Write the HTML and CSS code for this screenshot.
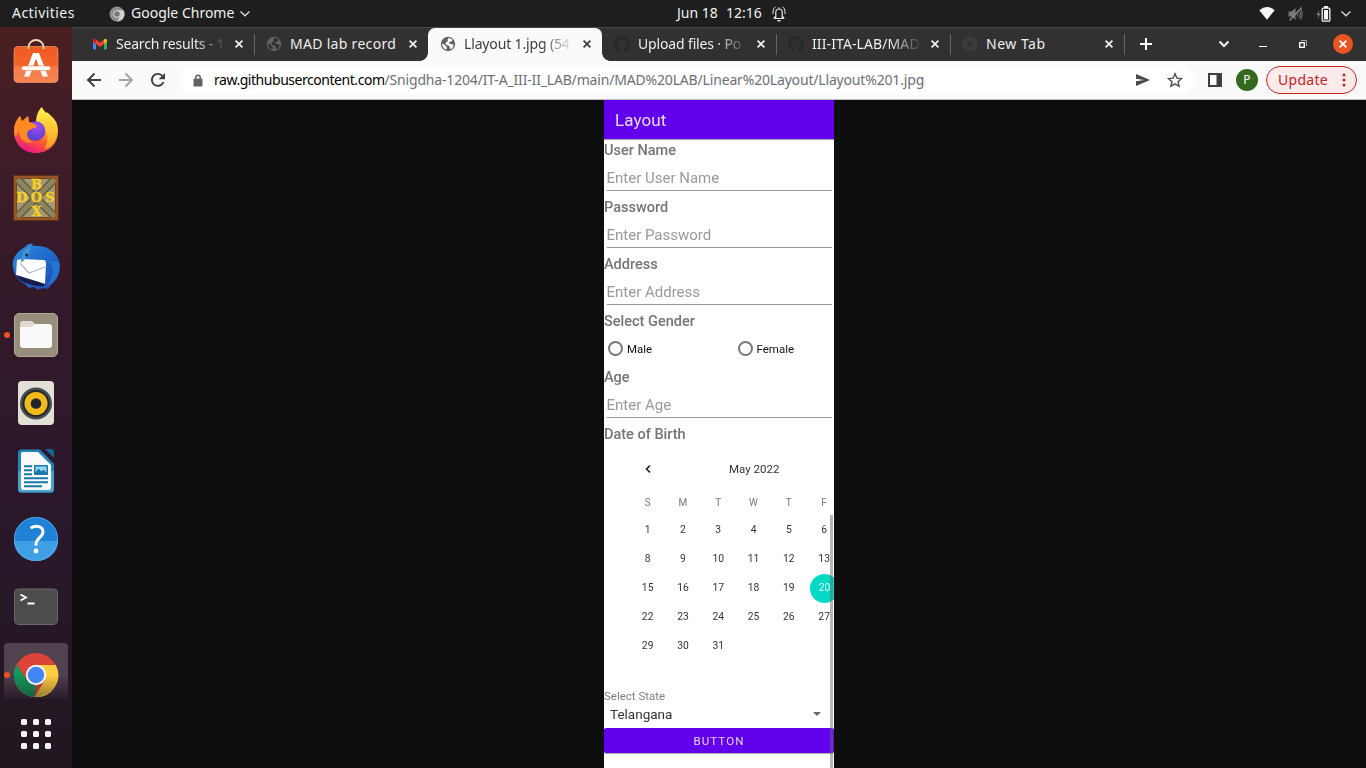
FILE: index.html
```html
<!DOCTYPE html>
<html lang="en">
<head>
<meta charset="utf-8">
<title>Llayout 1.jpg</title>
<link rel="stylesheet" href="styles.css">
</head>
<body>
<svg width="0" height="0" class="defs">
  <defs>
    <linearGradient id="orange" x1="0" y1="0" x2="0" y2="1"><stop offset="0" stop-color="#f15a22"/><stop offset=".55" stop-color="#f4642c"/><stop offset=".56" stop-color="#f67a47"/><stop offset="1" stop-color="#f68752"/></linearGradient>
    <linearGradient id="fox" x1=".8" y1="0" x2=".3" y2="1"><stop offset="0" stop-color="#fff44f"/><stop offset=".35" stop-color="#ffb01f"/><stop offset=".65" stop-color="#ff5a30"/><stop offset="1" stop-color="#e8128f"/></linearGradient>
    <linearGradient id="flame" x1=".5" y1="0" x2=".5" y2="1"><stop offset="0" stop-color="#fff24c"/><stop offset="1" stop-color="#ff9e22"/></linearGradient>
    <radialGradient id="globe" cx=".6" cy=".3" r=".8"><stop offset="0" stop-color="#a34cf0"/><stop offset="1" stop-color="#4a3ec8"/></radialGradient>
    <linearGradient id="bird" x1="0" y1="0" x2="1" y2="1"><stop offset="0" stop-color="#2b8fe6"/><stop offset=".6" stop-color="#1e62c4"/><stop offset="1" stop-color="#253fa8"/></linearGradient>
    <linearGradient id="shade" x1="0" y1="0" x2="0" y2="1"><stop offset=".5" stop-color="#211720" stop-opacity="0"/><stop offset="1" stop-color="#211720" stop-opacity=".45"/></linearGradient>
    <symbol id="x" viewBox="0 0 10 10"><path d="M1.600 1.600l6.800 6.800M8.400 1.600L1.600 8.400" fill="none" stroke="currentColor" stroke-width="1.800"/></symbol>
    <symbol id="world" viewBox="0 0 16 16"><circle cx="8" cy="8" r="7.200" fill="currentColor"/><path d="M8.400 2.100c1.600 0 3 .7 4 1.800l-.9 1.600-2.200.4-.4 1.300 1.800.7 2.900.5c0 1.800-1 3.900-2.700 4.700-.9-.1-1.300-.9-1-1.800L8.600 9.500 6.600 8.900 5.400 7.500l1.100-1.600 1.500-.7-.5-1.300zM2 7.400l2.300 1.200 2 1.700.5 1.500-.3 1.800C3.900 12.900 1.900 10.600 2 7.400z" fill="var(--cut)"/></symbol>
    <symbol id="octocat" viewBox="0 0 16 16"><path fill="currentColor" d="M8 0C3.580 0 0 3.580 0 8c0 3.540 2.290 6.530 5.470 7.590.4.070.55-.17.55-.38 0-.19-.01-.82-.01-1.490-2.010.37-2.530-.49-2.690-.94-.09-.23-.48-.94-.82-1.130-.28-.15-.68-.52-.01-.53.63-.01 1.080.58 1.230.82.72 1.210 1.870.87 2.330.66.070-.52.28-.87.51-1.070-1.780-.2-3.640-.89-3.640-3.950 0-.87.31-1.590.82-2.150-.08-.2-.36-1.020.08-2.120 0 0 .67-.21 2.200.82.640-.18 1.320-.27 2-.27s1.360.09 2 .27c1.530-1.040 2.200-.82 2.200-.82.440 1.100.160 1.920.080 2.120.510.560.820 1.270.820 2.150 0 3.070-1.870 3.750-3.650 3.950.290.250.540.730.540 1.480 0 1.070-.010 1.930-.010 2.200 0 .210.150.460.550.380A8.010 8.010 0 0 0 16 8c0-4.420-3.580-8-8-8z"/></symbol>
    <symbol id="mono-chrome" viewBox="0 0 16 16"><circle cx="8" cy="8" r="7.500" fill="var(--a)"/><path d="M8 4.200h6.500A7.500 7.500 0 0 1 8 15.500L11.300 10z" fill="var(--b)"/><circle cx="8" cy="8" r="3.700" fill="var(--b)"/><circle cx="8" cy="8" r="2.700" fill="var(--c)"/></symbol>
  </defs>
</svg>

<header class="topbar">
  <span class="activities">Activities</span>
  <div class="app-menu">
    <svg class="mono" width="16" height="16"><use href="#mono-chrome"/></svg>
    <span class="app-name">Google Chrome</span>
    <svg width="12" height="8" viewBox="0 0 12 8"><path d="M1.500 1.500L6 5.800l4.500-4.300" fill="none" stroke="#ddd" stroke-width="1.300"/></svg>
  </div>
  <div class="clock"><span class="date">Jun 18</span><span class="time">12:16</span>
    <svg width="14" height="17" viewBox="0 0 14 17" fill="none" stroke="#e4e4e4"><path d="M2.500 13.500h9M3.800 13V7.200a3.200 3.200 0 0 1 6.400 0V13M1.800 13.500l1.700-2M12.200 13.500l-1.700-2M7 4V2.500" stroke-width="1.200"/><path d="M3.600 1.700A6 6 0 0 0 1 6.500V9M10.400 1.700A6 6 0 0 1 13 6.500V9" stroke-width="1"/><path d="M5.500 15.700h3" stroke-width="1.500"/></svg>
  </div>
  <div class="status">
    <svg width="16" height="13" viewBox="0 0 16 13"><path d="M.3 3.200Q8-3 15.700 3.200L8 12.700z" fill="#f5f5f5"/></svg>
    <svg width="15" height="14" viewBox="0 0 15 14"><path d="M.5 4.500h3L7.500 1v12L3.500 9.500h-3z" fill="#777"/><path d="M9 4.500q1.800 2.500 0 5M11 3q3 4 0 8M12.800 1.500q3 5.500-.5 11" fill="none" stroke="#6a6a6a" stroke-width="1.200"/><path d="M13.500.5l-12 13" stroke="#888" stroke-width="1.200"/></svg>
    <svg width="15" height="16" viewBox="0 0 15 16"><path d="M3.500 4L.5 9h2L1.500 13l3-5.300h-2z" fill="#888"/><path d="M8 0h4v2H8z" fill="#f5f5f5"/><rect x="6.200" y="2.200" width="7.600" height="13" rx="1" fill="none" stroke="#f5f5f5" stroke-width="1.300"/><rect x="8" y="4" width="4" height="9.500" fill="#f5f5f5"/></svg>
    <svg width="12" height="8" viewBox="0 0 12 8"><path d="M1.500 1.500L6 5.800l4.500-4.300" fill="none" stroke="#ddd" stroke-width="1.300"/></svg>
  </div>
</header>

<div class="desktop">
  <nav class="dock">
    <div class="dock-item"><svg width="48" height="48" viewBox="0 0 48 48"><rect x="2" y="8.500" width="44" height="36" rx="4" fill="url(#orange)" stroke="#f79a70" stroke-width=".7"/><path d="M16.500 11V9a7.500 7 0 0 1 15 0v2" fill="none" stroke="#f5dcae" stroke-width="1.800"/><path d="M21 15h6l9 23.500h-5.500L24 20.500 17.500 38.500H12z" fill="#fff"/><rect x="9.500" y="28" width="29" height="4.500" rx="2.200" fill="#fff" stroke="#f4703b" stroke-width=".6"/></svg></div>
    <div class="dock-item"><svg width="48" height="48" viewBox="0 0 48 48"><path d="M2 25c0-6 2-10 6-15l2 6 6-6 1 7c5-1 8-1 11 0 2-7 4-12 8-10 7 6 10 10 10 18 0 13-9 22-22 22S2 38 2 25z" fill="url(#fox)"/><path d="M30 1c1 4 7 8 11 14 5 8 5 15 1 21-2 4-5 6-10 7 6-8 5-21-8-27 0-5 2-12 6-15z" fill="url(#flame)"/><circle cx="23.500" cy="25" r="9.800" fill="url(#globe)"/><path d="M8 10l2 5 6-5 1 6c3 1 5 1 8 4-2 3-6 2-9 5-2 5 0 9 5 12-9 1-14-5-14-12-2 2-3 4-3 7-4-8-1-17 4-22z" fill="#ff8a22"/></svg></div>
    <div class="dock-item"><svg width="46" height="46" viewBox="0 0 46 46"><rect width="46" height="46" fill="#9b5424"/><rect x="3.500" y="3.500" width="39" height="39" fill="#a39874" stroke="#53331a"/><path d="M4 4l38 38M42 4L4 42" stroke="#625b40" stroke-width="8"/><path d="M4 4l38 38M42 4L4 42" stroke="#8d8460" stroke-width="5"/><path d="M2 2h42v42H2z" fill="none" stroke="#9b5424" stroke-width="3"/><path d="M.5.5h45v45H.5z" fill="none" stroke="#5c2f12" stroke-width="1"/><g class="dos-text"><text x="23.500" y="13.500">B</text><text x="9" y="27">D</text><text x="23.500" y="27">O</text><text x="37" y="27">S</text><text x="23.500" y="41">X</text></g></svg></div>
    <div class="dock-item bird"><svg width="48" height="48" viewBox="0 0 48 48"><path d="M1 18C3 11 8 7 13 4c2-3 5-4 8-3l-1 2C35 1 47 10 48 23c0 9-4 15-9 19l-3 4-6-1-4 2-4-3-5 1-4-4C7 39-1 29 1 18z" fill="url(#bird)"/><path d="M5 17l5-1L31 17q3 0 3 3l-1 21L4 32z" fill="#fff"/><path d="M8 20l9 10 16-6" fill="none" stroke="#b5b5c0" stroke-width="1.200"/><path d="M9 19c0-8 4-14 10-16-2 3 0 5-3 8-2 4-3 6-6 8z" fill="#4793ce"/><circle cx="14.500" cy="12" r="1.500" fill="#15254f"/><path d="M4 32l29 9-1 2c-6 1-11-1-15-2l-4-1C9 38 6 36 4 32z" fill="#1a1b48"/><path d="M33 17c7 3 9 8 7 16l-5 10c10-5 14-14 12-24z" fill="#2375d1"/></svg></div>
    <div class="dock-item running files"><svg width="48" height="48" viewBox="0 0 48 48"><rect x="2.500" y="2.500" width="43" height="43" rx="4.500" fill="#968e7b" stroke="#b1aa99"/><path d="M8 13q0-3 3-3h9l3 3v6H8z" fill="#dfdbd0"/><path d="M8 18q0-2 2-2h10l3-3h14q3 0 3 3v18q0 3-3 3H11q-3 0-3-3z" fill="#fafafa"/></svg></div>
    <div class="dock-item"><svg width="48" height="48" viewBox="0 0 48 48"><rect x="6" y="2" width="36" height="44" rx="4" fill="#e3e0d5"/><circle cx="24" cy="24.500" r="16" fill="#484d52"/><circle cx="24" cy="24.500" r="13.500" fill="#24282d"/><circle cx="24" cy="24.500" r="11.500" fill="#f2b91d"/><circle cx="24" cy="24.500" r="5.300" fill="#222629"/></svg></div>
    <div class="dock-item"><svg width="48" height="48" viewBox="0 0 48 48"><path d="M9.500 2.500H28L42 17v25q0 3.500-3.500 3.500h-29Q6 45.500 6 42V6q0-3.500 3.500-3.500z" fill="#2382b8"/><path d="M6 24h36v18q0 3.500-3.500 3.500h-29Q6 45.500 6 42z" fill="#49a0cd"/><path d="M10.500 5H26l13 13v23q0 2-2 2H11q-2 0-2-2V7q0-2 1.500-2z" fill="#fafafa"/><path d="M33 2h6q3 0 3 3v6z" fill="#176391"/><path d="M12 19.200h8M12 23.200h8M12 27.200h8M12 31.300h24M12 35.300h24M12 39.300h18" stroke="#1678ad" stroke-width="2"/><rect x="22" y="18" width="14" height="10" rx="1" fill="#1678ad"/><path d="M23.500 19.500h11v6l-3-3-2 2-3-3-3 4z" fill="#98d7f4"/></svg></div>
    <div class="dock-item"><svg width="48" height="48" viewBox="0 0 48 48"><circle cx="24" cy="24" r="22" fill="#1f82d6"/><path d="M2 26a22 20 0 0 0 44 0z" fill="#3f9fe5"/><circle cx="24" cy="24" r="21.600" fill="none" stroke="#5ab0eb" stroke-width=".8"/><path d="M18.500 13c6-3.500 12.500-1.500 12.500 4 0 5-7 6.500-7 12v1.500" fill="none" stroke="#fff" stroke-width="3"/><circle cx="24" cy="36" r="2.400" fill="#fff"/></svg></div>
    <div class="dock-item"><svg width="48" height="48" viewBox="0 0 48 48"><rect x="2.500" y="6" width="43" height="35.500" rx="4" fill="#4c4c4c" stroke="#686868"/><path d="M8.500 11.500l5.500 3-5.500 3M15.500 20.500h7" fill="none" stroke="#fff" stroke-width="1.800"/></svg></div>
    <div class="dock-item running current"><svg width="48" height="48" viewBox="0 0 48 48"><circle cx="24" cy="24" r="22" fill="#db4437"/><path d="M4.500 13.500L15 29l9 6-1.500 11A22 22 0 0 1 4.500 13.500z" fill="#11985a"/><path d="M24 14h19.800A22 22 0 0 1 22.600 46L33 29z" fill="#ffcd40"/><circle cx="24" cy="24" r="22" fill="url(#shade)"/><circle cx="24" cy="24" r="10.200" fill="#f1f1f1"/><circle cx="24" cy="24" r="8.200" fill="#4285f4"/></svg></div>
    <div class="apps"><i></i><i></i><i></i><i></i><i></i><i></i><i></i><i></i><i></i></div>
  </nav>

  <main class="browser">
    <div class="tabs">
      <div class="tab line"><svg width="16" height="16" viewBox="0 0 16 16"><path d="M1 3v10.500h3V6z" fill="#4285f4"/><path d="M12 6v7.500h3V3z" fill="#34a853"/><path d="M4 3.500l4 3 4-3V8l-4 3-4-3z" fill="#ea4335"/><path d="M1 4.500Q1.500 1.800 4 3.500V8L1 5.800z" fill="#c5221f"/><path d="M15 4.500Q14.500 1.800 12 3.500V8l3-2.200z" fill="#fbbc04"/></svg><span class="title fade t-search">Search results - 1</span><svg class="close"><use href="#x"/></svg></div>
      <div class="tab"><svg class="world dark" width="16" height="16"><use href="#world"/></svg><span class="title t-mad">MAD lab record</span><svg class="close"><use href="#x"/></svg></div>
      <div class="tab active"><svg class="world" width="16" height="16"><use href="#world"/></svg><span class="title fade t-lay">Llayout 1.jpg (54</span><svg class="close"><use href="#x"/></svg></div>
      <div class="tab line"><svg class="cat" width="16" height="16"><use href="#octocat"/></svg><span class="title fade t-up">Upload files · Po</span><svg class="close"><use href="#x"/></svg></div>
      <div class="tab line"><svg class="cat" width="16" height="16"><use href="#octocat"/></svg><span class="title fade t-iii">III-ITA-LAB/MAD</span><svg class="close"><use href="#x"/></svg></div>
      <div class="tab line"><svg class="mono dim" width="16" height="16"><use href="#mono-chrome"/></svg><span class="title t-new">New Tab</span><svg class="close"><use href="#x"/></svg></div>
      <svg class="plus" width="14" height="14" viewBox="0 0 14 14"><path d="M7 1v12M1 7h12" stroke="#fff" stroke-width="2"/></svg>
      <div class="window-buttons">
        <svg width="12" height="10" viewBox="0 0 12 10"><path d="M1.500 2.500L6 7l4.500-4.500" fill="none" stroke="#f4f4f4" stroke-width="2"/></svg>
        <svg width="8" height="8" viewBox="0 0 8 8"><path d="M0 6.500h8" stroke="#fff"/></svg>
        <svg width="8" height="8" viewBox="0 0 8 8"><path d="M2 .5h5.500V6" fill="none" stroke="#aaa"/><rect x=".7" y="2.700" width="4.600" height="4.600" fill="none" stroke="#fff" stroke-width="1.400"/></svg>
        <span class="quit"><svg width="10" height="10"><use href="#x"/></svg></span>
      </div>
    </div>

    <div class="toolbar">
      <svg class="back" width="16" height="16" viewBox="0 0 16 16"><path d="M15 8H2M8.500 1.500L2 8l6.500 6.500" fill="none" stroke="#3c4043" stroke-width="1.900"/></svg>
      <svg class="fwd" width="16" height="16" viewBox="0 0 16 16"><path d="M1 8h13M7.500 1.500L14 8l-6.500 6.500" fill="none" stroke="#a3a3a5" stroke-width="1.900"/></svg>
      <svg class="reload" width="16" height="16" viewBox="0 0 16 16"><path d="M13.500 10A6 6 0 1 1 12.500 4L14 5.500" fill="none" stroke="#3c4043" stroke-width="1.900"/><path d="M15 1v6.300H8.700z" fill="#3c4043"/></svg>
      <div class="omnibox">
        <svg width="10" height="13" viewBox="0 0 10 13"><rect x=".5" y="4.500" width="9" height="8" rx="1" fill="#5f6368"/><path d="M2.700 5V3.500a2.300 2.300 0 0 1 4.600 0V5" fill="none" stroke="#5f6368" stroke-width="1.400"/></svg>
        <span class="url"><b>raw.githubusercontent.com</b><span class="path">/Snigdha-1204/IT-A_III-II_LAB/main/MAD%20LAB/Linear%20Layout/Llayout%201.jpg</span></span>
        <svg class="send" width="14" height="12" viewBox="0 0 14 12"><path d="M0 0l14 6-14 6V7.300L8 6 0 4.700z" fill="#494c50"/></svg>
        <svg width="16" height="16" viewBox="0 0 16 16"><path d="M8 1.700l1.900 4.400 4.700.4-3.600 3.200 1.100 4.700L8 11.900l-4.100 2.500L5 9.700 1.400 6.500l4.700-.4z" fill="none" stroke="#4d5156" stroke-width="1.400"/></svg>
      </div>
      <svg class="panel" width="14" height="14" viewBox="0 0 14 14"><path d="M0 0h14v14H0z" fill="#3c4043"/><path d="M2 2h6.500v10H2z" fill="#fff"/></svg>
      <span class="avatar">P</span>
      <div class="update"><span>Update</span><svg width="4" height="14" viewBox="0 0 4 14" fill="#c5221f"><circle cx="2" cy="2" r="1.500"/><circle cx="2" cy="7" r="1.500"/><circle cx="2" cy="12" r="1.500"/></svg></div>
    </div>

    <section class="viewer">
      <div class="phone">
        <div class="appbar"><span class="soft">Layout</span></div>
        <div class="form soft">
          <div class="field"><label>User Name</label><div class="input">Enter User Name</div></div>
          <div class="field"><label>Password</label><div class="input">Enter Password</div></div>
          <div class="field"><label>Address</label><div class="input">Enter Address</div></div>
          <label>Select Gender</label>
          <div class="radios"><span><i></i>Male</span><span><i></i>Female</span></div>
          <div class="field"><label>Age</label><div class="input">Enter Age</div></div>
          <label>Date of Birth</label>
          <div class="month"><svg width="6" height="8" viewBox="0 0 6 8"><path d="M5 .6L1.500 4 5 7.400" fill="none" stroke="#222" stroke-width="1.600"/></svg><span>May 2022</span></div>
          <div class="grid weekdays"><span>S</span><span>M</span><span>T</span><span>W</span><span>T</span><span>F</span></div>
          <div class="grid days">
            <span>1</span><span>2</span><span>3</span><span>4</span><span>5</span><span>6</span>
            <span>8</span><span>9</span><span>10</span><span>11</span><span>12</span><span>13</span>
            <span>15</span><span>16</span><span>17</span><span>18</span><span>19</span><span class="picked">20</span>
            <span>22</span><span>23</span><span>24</span><span>25</span><span>26</span><span>27</span>
            <span>29</span><span>30</span><span>31</span>
          </div>
          <div class="state-label">Select State</div>
          <div class="state"><span>Telangana</span><i></i></div>
        </div>
        <div class="button"><span class="soft">BUTTON</span></div>
        <div class="scrollbar"></div>
      </div>
    </section>
  </main>
</div>
</body>
</html>
```
FILE: styles.css
```css
* { box-sizing: border-box; }
html, body { margin: 0; height: 100%; overflow: hidden; }
body { width: 1366px; height: 768px; display: flex; flex-direction: column; background: #0e0e0e; font-family: "Noto Sans", "Open Sans", sans-serif; font-size: 14px; }
.defs { position: absolute; }
svg { flex: none; display: block; }
span { white-space: nowrap; }

.topbar { height: 27px; flex: none; background: #1e1e1e; color: #f0f0f0; display: flex; align-items: center; padding-left: 12px; line-height: 25px; }
.topbar span { padding-bottom: 2px; }
.activities { width: 97px; letter-spacing: .45px; }
.app-menu { display: flex; align-items: center; width: 568px; }
.app-name { width: 114px; padding-left: 6px; }
.mono { --a: #8d8d8d; --b: #d2d2d2; --c: #777; }
.clock { display: flex; align-items: center; width: 120px; }
.date { width: 49px; }
.time { width: 46px; }
.status { margin-left: auto; padding-right: 14px; display: flex; align-items: center; gap: 13px; }
.status svg:nth-child(3) { margin-left: 0; margin-right: -4px; }

.desktop { flex: 1; display: flex; min-height: 0; }
.dock { width: 72px; flex: none; padding-top: 1px; background: linear-gradient(#4a1f21 0, #3d1b29 20%, #341929 35%, #2a182b 65%, #211720 100%); }
.dock-item { height: 68.100px; display: flex; align-items: center; justify-content: center; position: relative; }
.bird { padding-top: 2px; }
.files { padding-top: 2px; }
.running::before { content: ""; position: absolute; left: 4px; top: 31px; width: 6px; height: 6px; border-radius: 50%; background: #e95420; }
.files::before { top: 32px; }
.current::after { content: ""; position: absolute; z-index: 0; left: 4px; top: 2px; width: 64px; height: 56px; border-radius: 4px 4px 0 0; background: linear-gradient(#50434f 0, #50434f 55%, #2a1c29 100%); }
.current svg, .current::before { z-index: 1; }
.current svg { position: relative; }
.dos-text { font: bold 13px "DejaVu Serif", serif; fill: #f8d022; text-anchor: middle; stroke: #f8d022; stroke-width: .3px; }
.apps { display: grid; grid-template-columns: repeat(3, 6px); gap: 6px; justify-content: center; padding-top: 10px; }
.apps i { height: 6px; background: #f5f5f3; border-radius: 1.500px; }

.browser { flex: 1; display: flex; flex-direction: column; min-width: 0; }
.tabs { height: 34px; flex: none; background: #323031; border-top: 1px solid #484848; display: flex; align-items: center; padding-left: 8px; color: #eee; }
.tab { width: 174px; height: 33px; flex: none; display: flex; align-items: center; padding-left: 12px; position: relative; }
.title { width: 107px; margin-left: 8px; line-height: 22px; padding-bottom: 2px; }
.t-search { letter-spacing: -.2px; }
.t-mad { letter-spacing: .3px; }
.t-lay { letter-spacing: -.15px; }
.t-up { letter-spacing: -.15px; }
.t-iii { letter-spacing: .1px; }
.t-new { letter-spacing: .5px; }
.fade { -webkit-mask-image: linear-gradient(90deg, #000 78px, transparent 110px); mask-image: linear-gradient(90deg, #000 78px, transparent 110px); }
.close { width: 10px; height: 10px; margin-left: 11px; margin-top: -1px; }
.line::after { content: ""; position: absolute; right: -1px; top: 6px; height: 21px; width: 1px; background: #666; }
.active { background: #fafafa; color: #3c4043; border-radius: 7px 7px 0 0; }
.active::before, .active::after { content: ""; position: absolute; bottom: 0; width: 8px; height: 8px; }
.active::before { left: -8px; background: radial-gradient(circle at 0 0, transparent 7.500px, #fafafa 8px); }
.active::after { right: -8px; background: radial-gradient(circle at 100% 0, transparent 7.500px, #fafafa 8px); }
.tab > svg:first-child { margin-top: -1px; }
.world { color: #5f6368; --cut: #fafafa; }
.world.dark { --cut: #323031; }
.cat { color: #24292f; }
.mono.dim { --a: #3c4043; --b: #3c4043; --c: #323031; }
.mono.dim { opacity: .8; }
.plus { margin-left: 15px; margin-top: -1px; }
.window-buttons { margin-left: auto; padding-right: 13px; display: flex; align-items: center; margin-top: -1px; }
.window-buttons > svg { margin-right: 29px; }
.window-buttons > svg:nth-child(3) { margin-right: 26px; }
.window-buttons > svg:nth-child(2) { margin-right: 32px; }
.quit { width: 20px; height: 20px; border-radius: 50%; background: #e95420; color: #fff; display: grid; place-items: center; }

.toolbar { height: 39px; flex: none; background: #fafafa; border-bottom: 1px solid #bdbdbd; display: flex; align-items: center; padding-left: 14px; }
.fwd { margin-left: 16px; }
.reload { margin-left: 16px; }
.omnibox { width: 1013px; height: 30px; margin-left: 14px; border-radius: 15px; background: #fff; display: flex; align-items: center; padding: 0 10px 0 13px; }
.url { margin-left: 11px; color: #6b6f74; font-size: 14px; display: flex; padding-bottom: 2px; }
.url b { font-weight: 400; color: #000; letter-spacing: -.460px; }
.path { letter-spacing: -.173px; }
.send { margin-left: auto; margin-right: 17px; }
.panel { margin-left: 15px; }
.avatar { width: 22px; height: 22px; margin-left: 14px; border-radius: 50%; background: #33691e; color: #fff; font-size: 12px; line-height: 22px; text-align: center; }
.update { width: 91px; height: 28px; margin-left: 8px; border: 1px solid #c5221f; border-radius: 14px; background: #fbebea; color: #c5221f; display: flex; align-items: center; padding: 0 10px 0 11px; justify-content: space-between; letter-spacing: .3px; }
.update span { padding-bottom: 1px; }

.viewer { flex: 1; background: #0e0e0e; padding-left: 532px; min-height: 0; }
.phone { width: 230px; height: 668px; background: #fff; position: relative; overflow: hidden; font-family: Roboto, sans-serif; color: #333; }
.soft { filter: blur(.4px); }
.appbar { height: 39px; background: #6200ee; color: #e6dafb; font-size: 17px; line-height: 41px; padding-left: 11px; letter-spacing: .1px; box-shadow: 0 1px 1px #aaa; }
.appbar span { display: block; }
.form { height: 588.500px; }
.field { height: 57.100px; }
label { display: block; height: 22px; line-height: 23px; font-size: 14.500px; font-weight: 500; color: #747474; }
.input { height: 30px; margin: 0 2.500px; line-height: 35px; font-size: 15px; color: #999; border-bottom: 1px solid #999; }
.radios { height: 33px; margin-bottom: .5px; display: flex; font-size: 11.500px; color: #111; align-items: center; }
.radios span { width: 129.500px; flex: none; padding-left: 4px; display: flex; align-items: center; gap: 4px; }
.radios i { width: 15px; height: 15px; border: 2px solid #777; border-radius: 50%; }
.month { height: 48px; display: flex; align-items: center; font-size: 11.500px; }
.month svg { margin-left: 40.500px; }
.month span { margin-left: 78.500px; }
.grid { display: grid; grid-template-columns: repeat(6, 35.300px); padding-left: 26px; text-align: center; }
.weekdays { font-size: 10px; color: #777; line-height: 20px; }
.days { font-size: 10.300px; grid-auto-rows: 28.800px; line-height: 28.800px; padding-top: 3.500px; }
.picked { width: 29px; height: 29px; margin-left: 3.500px; border-radius: 50%; background: #03dac5; color: #d9fff8; }
.state-label { margin-top: 26.500px; height: 18px; line-height: 18px; font-size: 11.500px; color: #808080; }
.state { height: 21px; line-height: 18px; padding: 0 13px 2px 6px; font-size: 13.500px; display: flex; justify-content: space-between; align-items: center; }
.state i { border: 4px solid transparent; border-top-color: #666; border-bottom: 0; }
.button { height: 25.500px; border-radius: 2px; background: #6200ee; color: #e5d6fb; font-size: 11.500px; line-height: 27px; text-align: center; letter-spacing: 1.100px; box-shadow: 0 1px 1px #aaa; }
.button span { display: block; }
.scrollbar { position: absolute; right: 1px; top: 415px; bottom: 0; width: 3px; background: rgba(110, 110, 110, .5); }
```
